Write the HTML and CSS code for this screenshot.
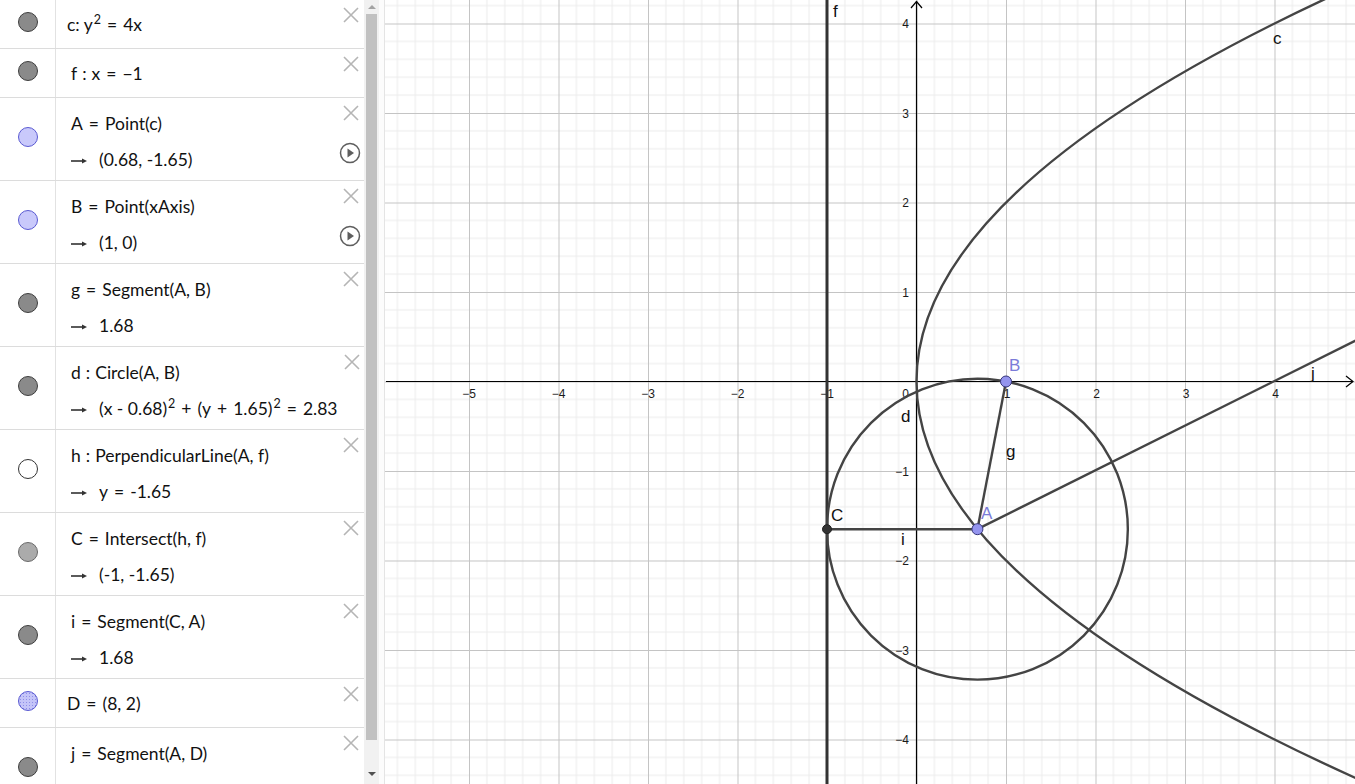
FILE: index.html
```html
<!DOCTYPE html>
<html>
<head>
<meta charset="utf-8">
<link rel="stylesheet" href="styles.css">
</head>
<body>
<div class="app">
  <aside class="algebra">
    <div class="list">
      <div class="row single">
        <div class="marker"><span class="dot gray"></span></div>
        <div class="content tight"><div class="line">c: y<sup>2</sup><span class="op">=</span>4x</div></div>
        <div class="actions"><svg class="close" viewBox="0 0 16 16"><path d="M1 1L15 15M15 1L1 15"/></svg></div>
      </div>
      <div class="row single">
        <div class="marker"><span class="dot gray"></span></div>
        <div class="content"><div class="line">f<span class="op col">:</span>x<span class="op">=</span>−1</div></div>
        <div class="actions"><svg class="close" viewBox="0 0 16 16"><path d="M1 1L15 15M15 1L1 15"/></svg></div>
      </div>
      <div class="row double">
        <div class="marker"><span class="dot point"></span></div>
        <div class="content"><div class="line">A<span class="op">=</span>Point(c)</div><div class="line"><svg class="arrow" viewBox="0 0 16 8"><path d="M0 4H12"/><path class="head" d="M11 1.5L16 4L11 6.5Z"/></svg>(0.68, -1.65)</div></div>
        <div class="actions"><svg class="close" viewBox="0 0 16 16"><path d="M1 1L15 15M15 1L1 15"/></svg><svg class="play" viewBox="0 0 22 22"><circle cx="11" cy="11" r="9.5"/><path d="M8.5 6.5L15 11L8.5 15.5Z"/></svg></div>
      </div>
      <div class="row double">
        <div class="marker"><span class="dot point"></span></div>
        <div class="content"><div class="line">B<span class="op">=</span>Point(xAxis)</div><div class="line"><svg class="arrow" viewBox="0 0 16 8"><path d="M0 4H12"/><path class="head" d="M11 1.5L16 4L11 6.5Z"/></svg>(1, 0)</div></div>
        <div class="actions"><svg class="close" viewBox="0 0 16 16"><path d="M1 1L15 15M15 1L1 15"/></svg><svg class="play" viewBox="0 0 22 22"><circle cx="11" cy="11" r="9.5"/><path d="M8.5 6.5L15 11L8.5 15.5Z"/></svg></div>
      </div>
      <div class="row double">
        <div class="marker"><span class="dot gray"></span></div>
        <div class="content"><div class="line">g<span class="op">=</span>Segment(A, B)</div><div class="line"><svg class="arrow" viewBox="0 0 16 8"><path d="M0 4H12"/><path class="head" d="M11 1.5L16 4L11 6.5Z"/></svg>1.68</div></div>
        <div class="actions"><svg class="close" viewBox="0 0 16 16"><path d="M1 1L15 15M15 1L1 15"/></svg></div>
      </div>
      <div class="row double">
        <div class="marker"><span class="dot gray"></span></div>
        <div class="content"><div class="line">d<span class="op col">:</span>Circle(A, B)</div><div class="line"><svg class="arrow" viewBox="0 0 16 8"><path d="M0 4H12"/><path class="head" d="M11 1.5L16 4L11 6.5Z"/></svg>(x - 0.68)<sup>2</sup><span class="op">+</span>(y<span class="op">+</span>1.65)<sup>2</sup><span class="op">=</span>2.83</div></div>
        <div class="actions"><svg class="close" viewBox="0 0 16 16"><path d="M1 1L15 15M15 1L1 15"/></svg></div>
      </div>
      <div class="row double">
        <div class="marker"><span class="dot empty"></span></div>
        <div class="content"><div class="line">h<span class="op col">:</span>PerpendicularLine(A, f)</div><div class="line"><svg class="arrow" viewBox="0 0 16 8"><path d="M0 4H12"/><path class="head" d="M11 1.5L16 4L11 6.5Z"/></svg>y<span class="op">=</span>-1.65</div></div>
        <div class="actions"><svg class="close" viewBox="0 0 16 16"><path d="M1 1L15 15M15 1L1 15"/></svg></div>
      </div>
      <div class="row double">
        <div class="marker"><span class="dot light"></span></div>
        <div class="content"><div class="line">C<span class="op">=</span>Intersect(h, f)</div><div class="line"><svg class="arrow" viewBox="0 0 16 8"><path d="M0 4H12"/><path class="head" d="M11 1.5L16 4L11 6.5Z"/></svg>(-1, -1.65)</div></div>
        <div class="actions"><svg class="close" viewBox="0 0 16 16"><path d="M1 1L15 15M15 1L1 15"/></svg></div>
      </div>
      <div class="row double">
        <div class="marker"><span class="dot gray"></span></div>
        <div class="content"><div class="line">i<span class="op">=</span>Segment(C, A)</div><div class="line"><svg class="arrow" viewBox="0 0 16 8"><path d="M0 4H12"/><path class="head" d="M11 1.5L16 4L11 6.5Z"/></svg>1.68</div></div>
        <div class="actions"><svg class="close" viewBox="0 0 16 16"><path d="M1 1L15 15M15 1L1 15"/></svg></div>
      </div>
      <div class="row single">
        <div class="marker"><span class="dot dotted"></span></div>
        <div class="content tight"><div class="line">D<span class="op">=</span>(8, 2)</div></div>
        <div class="actions"><svg class="close" viewBox="0 0 16 16"><path d="M1 1L15 15M15 1L1 15"/></svg></div>
      </div>
      <div class="row double">
        <div class="marker"><span class="dot gray"></span></div>
        <div class="content"><div class="line">j<span class="op">=</span>Segment(A, D)</div></div>
        <div class="actions"><svg class="close" viewBox="0 0 16 16"><path d="M1 1L15 15M15 1L1 15"/></svg></div>
      </div>
    </div>
    <div class="scrollbar">
      <span class="sarrow up"></span>
      <div class="thumb"></div>
      <span class="sarrow down"></span>
    </div>
    <div class="splitter"></div>
  </aside>
  <main class="graphics">
    <svg class="plot" width="970" height="784" viewBox="385 0 970 784">
      <defs>
        <pattern id="grid" patternUnits="userSpaceOnUse" x="916.5" y="381.5" width="89.5" height="89.5">
          <path class="minor" d="M17.9 0V89.5M35.8 0V89.5M53.7 0V89.5M71.6 0V89.5M0 17.9H89.5M0 35.8H89.5M0 53.7H89.5M0 71.6H89.5"/>
          <path class="major" d="M0.5 0V89.5M0 0.5H89.5"/>
        </pattern>
        <clipPath id="clip"><rect x="385" y="0" width="970" height="784"/></clipPath>
      </defs>
      <rect x="385" y="0" width="970" height="784" fill="#fff"/>
      <rect x="385" y="0" width="970" height="784" fill="url(#grid)"/>
      <g class="axes">
        <path d="M386 381.5H1353"/>
        <path d="M916.5 784V1.5"/>
        <path class="tip" d="M1346 376L1353 381.5L1346 387"/>
        <path class="tip" d="M911 8L916.5 1.5L922 8"/>
      </g>
      <g class="ticks">
        <text x="469" y="398" text-anchor="middle">−5</text>
        <text x="558.5" y="398" text-anchor="middle">−4</text>
        <text x="648" y="398" text-anchor="middle">−3</text>
        <text x="737.5" y="398" text-anchor="middle">−2</text>
        <text x="827" y="398" text-anchor="middle">−1</text>
        <text x="909" y="398" text-anchor="end">0</text>
        <text x="1007" y="398" text-anchor="middle">1</text>
        <text x="1096.5" y="398" text-anchor="middle">2</text>
        <text x="1186" y="398" text-anchor="middle">3</text>
        <text x="1275.5" y="398" text-anchor="middle">4</text>
        <text x="909" y="28" text-anchor="end">4</text>
        <text x="909" y="117.5" text-anchor="end">3</text>
        <text x="909" y="207" text-anchor="end">2</text>
        <text x="909" y="296.5" text-anchor="end">1</text>
        <text x="909" y="475.5" text-anchor="end">−1</text>
        <text x="909" y="565" text-anchor="end">−2</text>
        <text x="909" y="654.5" text-anchor="end">−3</text>
        <text x="909" y="744" text-anchor="end">−4</text>
      </g>
      <g class="curves" clip-path="url(#clip)">
        <path class="thick" d="M827 0V784"/>
        <path d="M1389.96 -30.2Q443.05 381.5 1389.96 793.2"/>
        <circle cx="977.42" cy="529.18" r="150.42"/>
        <path d="M977.42 529.18L1006 381.5"/>
        <path d="M827 529.18H977.42"/>
        <path d="M977.42 529.18L1632.5 202.5"/>
      </g>
      <g class="points">
        <circle class="dark" cx="827" cy="529.18" r="4.5"/>
        <circle class="free" cx="977.42" cy="529.18" r="5.5"/>
        <circle class="free" cx="1006" cy="381.5" r="5.5"/>
      </g>
      <g class="labels">
        <text x="833" y="17">f</text>
        <text x="1273" y="44">c</text>
        <text x="1311" y="379">j</text>
        <text x="901" y="422">d</text>
        <text x="1006" y="457">g</text>
        <text x="901" y="545">i</text>
        <text x="831" y="521">C</text>
        <text class="blue" x="981" y="519">A</text>
        <text class="blue" x="1009" y="371">B</text>
      </g>
    </svg>
  </main>
</div>
</body>
</html>
```

FILE: styles.css
```css
html, body {
  margin: 0;
  padding: 0;
  background: #fff;
  overflow: hidden;
}

.app {
  display: flex;
  width: 1355px;
  height: 784px;
  overflow: hidden;
}

.algebra {
  display: flex;
  width: 385px;
  flex: 0 0 385px;
  height: 784px;
  overflow: hidden;
  background: #fff;
}

.list {
  width: 364px;
  flex: 0 0 364px;
  display: flex;
  flex-direction: column;
}

.row {
  display: grid;
  grid-template-columns: 56px 1fr 28px;
  box-sizing: border-box;
  border-bottom: 1px solid #dcdcdc;
  flex: 0 0 auto;
}

.row.single { height: 49px; }
.row.double { height: 83px; }

.marker {
  border-right: 1px solid #e2e2e2;
  display: flex;
  align-items: center;
  justify-content: center;
  padding-bottom: 4px;
  padding-left: 1px;
}

.dot {
  display: block;
  width: 20px;
  height: 20px;
  border-radius: 50%;
  box-sizing: border-box;
  border: 1px solid #3e3e3e;
  background: #8a8a8a;
}

.dot.point {
  background: #c9c9fb;
  border-color: #5a5ad2;
}

.dot.dotted {
  background-color: #c4c4f8;
  background-image: radial-gradient(circle, #8f8fe8 0.7px, transparent 0.9px);
  background-size: 3px 3px;
  border-color: #5a5ad2;
}

.dot.empty {
  background: #fff;
  border-color: #333;
}

.dot.light {
  background: #ababab;
  border-color: #6a6a6a;
}

.content {
  padding: 8px 0 0 15px;
  font-family: Lato, "Liberation Sans", sans-serif;
  font-size: 17.5px;
  color: #111;
  white-space: nowrap;
}

.row.single .content { padding-top: 7px; }
.content.tight { padding-left: 11px; }

.line {
  height: 36px;
  line-height: 36px;
  overflow: visible;
}

.line sup {
  font-size: 12.5px;
  line-height: 0;
  vertical-align: 7px;
  margin-left: 1px;
}

.op {
  margin: 0 6px;
}
.op.col {
  margin: 0 5px;
}

.arrow {
  display: inline-block;
  vertical-align: middle;
  width: 16px;
  height: 8px;
  margin-right: 12px;
  margin-top: -2px;
}
.arrow path {
  stroke: #333;
  stroke-width: 1.6;
  fill: none;
}
.arrow path.head {
  fill: #333;
  stroke: none;
}

.actions {
  display: flex;
  flex-direction: column;
  align-items: center;
  padding-top: 7px;
}

.close {
  width: 16px;
  height: 16px;
  margin-left: 1px;
}
.close path {
  stroke: #b5b5b5;
  stroke-width: 1.6;
  fill: none;
}

.play {
  width: 22px;
  height: 22px;
  margin-top: 21px;
}
.play circle {
  fill: none;
  stroke: #5e5e5e;
  stroke-width: 1.5;
}
.play path {
  fill: #5e5e5e;
}

.scrollbar {
  width: 15px;
  flex: 0 0 15px;
  background: #f1f1f1;
  display: flex;
  flex-direction: column;
  align-items: center;
}

.sarrow {
  display: block;
  width: 0;
  height: 0;
  border-left: 4px solid transparent;
  border-right: 4px solid transparent;
}
.sarrow.up {
  border-bottom: 4px solid #a3a3a3;
  margin-top: 5px;
  margin-bottom: 5px;
}
.sarrow.down {
  border-top: 4px solid #505050;
  margin-top: 32px;
}

.thumb {
  width: 11px;
  height: 726px;
  background: #c1c1c1;
}

.splitter {
  width: 6px;
  flex: 0 0 6px;
  background: #fcfcfc;
  border-right: 1px solid #e4e4e4;
  box-sizing: border-box;
}

.graphics {
  width: 970px;
  flex: 0 0 970px;
  height: 784px;
}

.plot { display: block; }

.minor {
  stroke: #ececec;
  stroke-width: 1;
  fill: none;
}
.major {
  stroke: #c4c4c4;
  stroke-width: 1;
  fill: none;
}

.axes path {
  stroke: #000;
  stroke-width: 1.2;
  fill: none;
}

.ticks text {
  font-family: "Liberation Sans", Arial, sans-serif;
  font-size: 12px;
  fill: #1a1a1a;
}

.curves path,
.curves circle {
  stroke: #444;
  stroke-width: 2.4;
  fill: none;
}
.curves path.thick {
  stroke: #333;
  stroke-width: 3;
}

.points circle.free {
  fill: #9494ee;
  stroke: #35357a;
  stroke-width: 1;
}
.points circle.dark {
  fill: #333;
  stroke: #222;
  stroke-width: 1;
}

.labels text {
  font-family: "Liberation Sans", Arial, sans-serif;
  font-size: 17px;
  fill: #111;
}
.labels text.blue {
  fill: #7b7bd8;
}
```
